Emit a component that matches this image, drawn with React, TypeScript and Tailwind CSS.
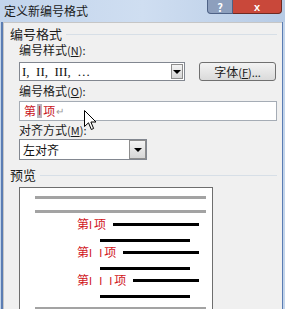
import React from "react";

const cjk = { fontFamily: '"Noto Sans CJK SC", "Liberation Sans", sans-serif' };
const serif = { fontFamily: '"Liberation Serif", "Noto Sans CJK SC", serif' };

const Label = ({ text, k, className = "" }: { text: string; k: string; className?: string }) => (
  <div className={`text-[12px] leading-[14px] text-[#1b1b1b] pl-[15px] ${className}`}>
    {text}
    <span className="text-[11px]">
      (<span className="underline">{k}</span>):
    </span>
  </div>
);

const DropArrow = ({ className = "" }: { className?: string }) => (
  <div
    className={`flex items-center justify-center border border-[#8d8d8d] bg-[linear-gradient(#f4f4f4,#d6d6d6)] ${className}`}
  >
    <div className="w-0 h-0 border-x-[4px] border-x-transparent border-t-[4px] border-t-black" />
  </div>
);

const PreviewRow = ({ num }: { num: string }) => (
  <div className="flex items-center h-[14px] ml-[42px] w-[122px]">
    <span className="text-[12px] leading-[14px] text-[#d0141a]">
      第<span className="tracking-[2px] text-[11px]" style={{ fontFamily: '"Liberation Sans", sans-serif' }}>{num.split("").join(" ")}</span>项
    </span>
    <div className="flex-1 h-[3px] bg-black ml-[7px]" />
  </div>
);

export default function App() {
  return (
    <div className="w-[285px] h-[309px] overflow-hidden bg-[#c3d4ea] relative" style={cjk}>
      {/* title bar */}
      <div className="h-[22px] flex items-start bg-[linear-gradient(90deg,#c2d4ec,#cfdef1_50%,#b7cbe5)]">
        <div className="pl-[4px] pt-[3px] text-[12px] leading-[16px] text-[#1a1a1a]">定义新编号格式</div>
        <div className="flex-1" />
        <div className="flex h-[14px] mr-[3px] shrink-0">
          <div className="w-[26px] h-[14px] flex items-center justify-center bg-[#8d9fbd] border border-t-0 border-[#4e6286] rounded-bl-[4px] text-white text-[11px] font-bold leading-[12px]">
            ?
          </div>
          <div className="w-[49px] h-[14px] flex items-center justify-center bg-[#c9483a] border border-t-0 border-l-0 border-[#6e2a22] rounded-br-[4px] text-white text-[11px] font-bold leading-[12px]" style={{ fontFamily: '"Liberation Sans", sans-serif' }}>
            x
          </div>
        </div>
      </div>

      {/* body */}
      <div className="ml-[1px] mr-[2px] h-[287px] border-l-2 border-r border-[#5b7db3]">
        <div className="h-full bg-[#f0f0f0] border-t border-l border-[#c6c6c6]">
          {/* group header */}
          <div className="flex items-center pt-[4px] pl-[6px] pr-[5px]">
            <span className="text-[13px] leading-[14px] text-[#1b1b1b]">编号格式</span>
            <div className="flex-1 h-px bg-[#d7dfe7] ml-[4px]" />
          </div>

          <Label text="编号样式" k="N" className="mt-[2px]" />

          <div className="flex items-center mt-[5px] pl-[15px]">
            <div className="w-[166px] h-[19px] bg-white border border-[#828790] flex items-center">
              <span className="flex-1 pl-[2px] text-[13px] leading-[15px] text-[#111] whitespace-pre" style={serif}>
                I,  II,  III,  …
              </span>
              <DropArrow className="w-[12px] h-[15px] mr-[1px]" />
            </div>
            <div className="ml-[14px] w-[77px] h-[19px] rounded-[3px] border border-[#707070] bg-[linear-gradient(#f3f3f3,#dadada)] flex items-center justify-center text-[12px] leading-[14px] text-[#1b1b1b]">
              字体<span className="text-[11px]">(<span className="underline">F</span>)...</span>
            </div>
          </div>

          <Label text="编号格式" k="O" className="mt-[3px]" />

          <div className="mt-[3px] ml-[15px] w-[258px] h-[20px] bg-white border border-[#a5acb5] flex items-center pl-[4px] text-[12px] leading-[14px]">
            <span className="text-[#c8141c]">第</span>
            <span className="bg-[#b9b4bc] text-[#c8141c] px-[1px] ml-[1px]" style={{ fontFamily: '"Liberation Sans", sans-serif' }}>I</span>
            <span className="text-[#c8141c] ml-[1px]">项</span>
            <span className="text-[#9a9a9a] text-[10px] ml-[1px]">↵</span>
          </div>

          <Label text="对齐方式" k="M" className="mt-[2px]" />

          <div className="mt-[2px] ml-[15px] w-[128px] h-[21px] bg-white border border-[#828790] flex items-center">
            <span className="flex-1 pl-[3px] text-[12px] leading-[14px] text-[#111]">左对齐</span>
            <DropArrow className="w-[17px] h-[19px]" />
          </div>

          {/* preview header */}
          <div className="flex items-center mt-[8px] pl-[6px] pr-[5px]">
            <span className="text-[13px] leading-[14px] text-[#1b1b1b]">预览</span>
            <div className="flex-1 h-px bg-[#d7dfe7] ml-[4px]" />
          </div>

          <div className="mt-[5px] ml-[15px] w-[194px] h-[140px] bg-white border border-[#6e6e6e] pt-[8px] pl-[15px]">
            <div className="w-[171px] h-[3px] bg-[#a3a3a3]" />
            <div className="w-[171px] h-[3px] bg-[#a3a3a3] mt-[11px]" />
            <div className="mt-[4px]">
              <PreviewRow num="I" />
            </div>
            <div className="ml-[65px] w-[90px] h-[3px] bg-black mt-[8px]" />
            <div className="mt-[3px]">
              <PreviewRow num="II" />
            </div>
            <div className="ml-[65px] w-[90px] h-[3px] bg-black mt-[8px]" />
            <div className="mt-[3px]">
              <PreviewRow num="III" />
            </div>
            <div className="ml-[65px] w-[90px] h-[3px] bg-black mt-[8px]" />
            <div className="w-[171px] h-[3px] bg-[#a3a3a3] mt-[9px]" />
          </div>
        </div>
      </div>

      {/* mouse cursor */}
      <svg className="absolute left-[84px] top-[110px]" width="13" height="21" viewBox="0 0 13 21">
        <path
          d="M0.5 0.5 L0.5 16.5 L4.5 12.8 L7.3 19.5 L9.6 18.5 L6.9 12 L12 12 Z"
          fill="white"
          stroke="black"
          strokeWidth="1"
          strokeLinejoin="round"
        />
      </svg>
    </div>
  );
}
